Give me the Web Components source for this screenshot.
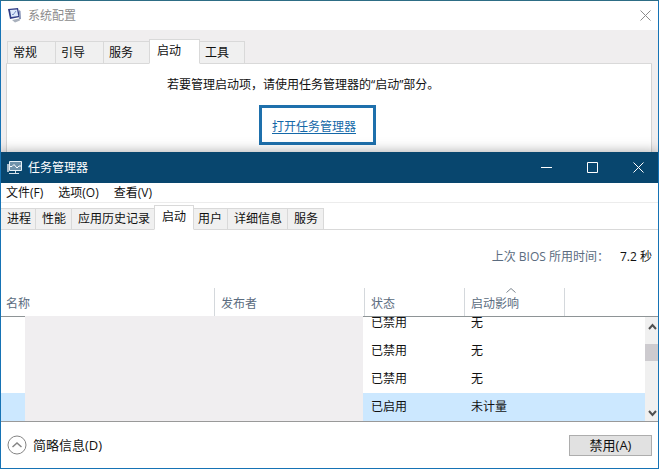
<!DOCTYPE html>
<html lang="zh-CN">
<head>
<meta charset="utf-8">
<title>系统配置</title>
<style>
  body {
    margin: 0;
    background: #fff;
    color: #111;
    font: 12px/18px "Open Sans", "Noto Sans CJK SC", sans-serif;
  }
</style>
</head>
<body>
<app-window class="config">
  <title-bar slot="title" controls="close">
    <svg slot="icon" width="15" height="15" viewBox="0 0 15 15">
      <path d="M1 1l10-1 2 9-10 2z" fill="#303c86"/>
      <path d="M3 2l7-.6 1.300 6.600-7 1z" fill="#dce8fa"/>
      <path d="M5 6l1 1 3-4" fill="none" stroke="#7a91c8"/>
      <path d="M12 2l1.500 1 .5 8-2 .5" fill="#8794b8"/>
      <path d="M5 12l7-1.500 1 2-5 2z" fill="#a9b1bd"/>
    </svg>
    系统配置
  </title-bar>
  <tab-strip variant="dialog" tabs="常规,引导,服务,启动,工具" active="启动"></tab-strip>
  <startup-panel></startup-panel>
</app-window>

<app-window class="manager">
  <title-bar slot="title" theme="dark" controls="min,max,close">
    <svg slot="icon" width="15" height="15" viewBox="0 0 15 15">
      <path d="M0 4h2v8H0z" fill="#a9bccb"/>
      <path d="M2.500 1.500h12v9h-12z" fill="#6f92aa" stroke="#e6f1f7"/>
      <path d="M3 6.500h2l2-2 3 3.500 2-2h2" fill="none" stroke="#fff"/>
      <path d="M8.500 11v2M2 13.500h10" stroke="#d3e0e9"/>
    </svg>
    任务管理器
  </title-bar>
  <menu-bar items="文件(F),选项(O),查看(V)"></menu-bar>
  <tab-strip tabs="进程,性能,应用历史记录,启动,用户,详细信息,服务" active="启动"></tab-strip>
  <bios-time><span slot="label">上次 BIOS 所用时间：</span>7.2 秒</bios-time>
  <startup-table></startup-table>
  <window-footer></window-footer>
</app-window>

<script>
class BaseElement extends HTMLElement {
  connectedCallback() {
    if (this.shadowRoot) return;
    const shadow = this.attachShadow({ mode: 'open' });
    const template = document.createElement('template');
    template.innerHTML = this.render();
    shadow.appendChild(template.content.cloneNode(true));
  }
}

class AppWindow extends BaseElement {
  render() {
    return `
      <style>
        :host {
          display: block;
          border: solid #1673b5;
          border-width: 0 1px;
          background: #fff;
        }
        :host(.config) {
          border-top: 1px solid #2d6d85;
        }
        :host(.config) .content {
          padding: 9px 6px 0 5px;
          background: #f0eeef;
        }
        :host(.manager) {
          position: relative;
          border-bottom: 1px solid #1673b5;
          box-shadow: 0 0 12px rgba(0, 0, 0, 0.35);
        }
      </style>
      <slot name="title"></slot>
      <div class="content"><slot></slot></div>
    `;
  }
}

const controlIcons = {
  min: { label: '最小化', path: 'M0 5.500h11' },
  max: { label: '最大化', path: 'M.5.500h10v10H.5z' },
  close: { label: '关闭', path: 'M.5.500l10 10M10.500.500l-10 10' }
};

class TitleBar extends BaseElement {
  render() {
    const buttons = this.getAttribute('controls').split(',').map(name => `
      <button aria-label="${controlIcons[name].label}">
        <svg width="11" height="11" viewBox="0 0 11 11"><path d="${controlIcons[name].path}"/></svg>
      </button>
    `).join('');

    return `
      <style>
        :host {
          display: flex;
          align-items: center;
          height: 29px;
          padding: 0 1px 0 6px;
          color: #8c8c8c;
        }
        :host([theme="dark"]) {
          height: 31px;
          padding: 0 8px 0 6px;
          background: #08466e;
          color: #fff;
        }
        ::slotted(svg) {
          display: block;
        }
        .title {
          flex: 1;
          margin-left: 6px;
        }
        .controls {
          display: flex;
          gap: 22px;
        }
        button {
          display: grid;
          place-items: center;
          width: 24px;
          height: 24px;
          padding: 0;
          border: 0;
          background: none;
          color: inherit;
        }
        path {
          fill: none;
          stroke: currentColor;
        }
      </style>
      <slot name="icon"></slot>
      <span class="title"><slot></slot></span>
      <div class="controls">${buttons}</div>
    `;
  }
}

class TabStrip extends BaseElement {
  render() {
    const active = this.getAttribute('active');
    const tabs = this.getAttribute('tabs').split(',').map(name =>
      `<button role="tab" aria-selected="${name === active}">${name}</button>`
    ).join('');

    return `
      <style>
        :host {
          display: block;
          padding-top: 2px;
          background: linear-gradient(#d9d9d9, #d9d9d9) bottom / 100% 1px no-repeat;
        }
        :host([variant="dialog"]) {
          padding: 0 1px;
        }
        .tabs {
          display: flex;
          align-items: flex-end;
        }
        button {
          height: 22px;
          padding: 0 5px 0 6px;
          border: solid #d9d9d9;
          border-width: 1px 0 1px 1px;
          background: #f0f0f0;
          color: inherit;
          font: inherit;
          white-space: nowrap;
        }
        button:first-child {
          padding-right: 4px;
          border-left-width: 0;
        }
        button:last-child {
          border-right-width: 1px;
        }
        button[aria-selected="true"] {
          position: relative;
          height: 25px;
          margin: 0 -3px 0 -1px;
          padding: 0 7px 2px;
          border-right-width: 1px;
          border-bottom-color: #fff;
          background: #fff;
        }
        :host([variant="dialog"]) button {
          height: 23px;
          padding: 0 18px 0 5px;
          border-left-width: 1px;
        }
        :host([variant="dialog"]) button:last-child {
          padding-right: 15px;
        }
        :host([variant="dialog"]) button[aria-selected="true"] {
          height: 25px;
          margin: 0 -1px 0 -2px;
          padding: 0 18px 2px 7px;
        }
      </style>
      <div class="tabs" role="tablist">${tabs}</div>
    `;
  }
}

class StartupPanel extends BaseElement {
  render() {
    return `
      <style>
        :host {
          display: block;
          padding: 12px 0 7px;
          border: solid #d4d4d4;
          border-width: 0 1px;
          background: #fff;
        }
        .message {
          width: 324px;
          margin: 0 auto;
        }
        p {
          margin: 0 0 11px;
        }
        .highlight {
          display: inline-block;
          box-sizing: border-box;
          height: 40px;
          margin-left: 92px;
          padding: 10px 17px 0 10px;
          border: 3px solid #1e70ac;
          vertical-align: top;
        }
        a {
          color: #1468a8;
          text-underline-offset: 2px;
        }
      </style>
      <div class="message">
        <p>若要管理启动项，请使用任务管理器的“启动”部分。</p>
        <span class="highlight"><a href="#">打开任务管理器</a></span>
      </div>
    `;
  }
}

class MenuBar extends BaseElement {
  render() {
    const items = this.getAttribute('items').split(',')
      .map(item => `<button>${item}</button>`).join('');

    return `
      <style>
        :host {
          display: flex;
          gap: 15px;
          height: 19px;
          padding: 0 5px;
          border-bottom: 1px solid #ececec;
        }
        button {
          padding: 0;
          border: 0;
          background: none;
          color: inherit;
          font: inherit;
        }
      </style>
      ${items}
    `;
  }
}

class BiosTime extends BaseElement {
  render() {
    return `
      <style>
        :host {
          display: flex;
          justify-content: flex-end;
          align-items: center;
          gap: 11px;
          height: 54px;
          padding: 0 6px 1px;
        }
        ::slotted([slot="label"]) {
          color: #5b6c80;
        }
      </style>
      <slot name="label"></slot>
      <span><slot></slot></span>
    `;
  }
}

const startupItems = [
  { status: '已禁用', impact: '无' },
  { status: '已禁用', impact: '无' },
  { status: '已禁用', impact: '无' },
  { status: '已启用', impact: '未计量', selected: true }
];

class StartupTable extends BaseElement {
  render() {
    const rows = startupItems.map(item => `
      <tr class="${item.selected ? 'selected' : ''}">
        <td></td><td></td><td>${item.status}</td><td>${item.impact}</td>
      </tr>
    `).join('');

    return `
      <style>
        :host {
          display: block;
          position: relative;
          border-bottom: 1px solid #999;
        }
        table, thead {
          display: block;
        }
        tr {
          display: grid;
          grid-template-columns: 1fr 150px 100px 100px 93px;
        }
        th, td {
          padding: 0 6px;
          text-align: left;
          font-weight: normal;
        }
        thead tr {
          height: 31px;
          border-bottom: 1px solid #8e9496;
          color: #5b6c80;
        }
        th {
          position: relative;
          margin-top: 3px;
          padding: 7px 5px 0;
          border-right: 1px solid #d4d8dc;
        }
        th:nth-child(n+2) {
          padding-left: 6px;
        }
        .sort {
          position: absolute;
          top: 0;
          left: calc(50% - 9px);
          fill: none;
          stroke: #7c858e;
        }
        /* the first row is partly scrolled under the header */
        tbody {
          display: flex;
          flex-direction: column;
          justify-content: flex-end;
          height: 104px;
          margin-right: 13px;
          overflow: hidden;
        }
        tbody tr {
          flex: none;
          height: 28px;
          grid-template-columns: 1fr 150px 100px 100px 80px;
          align-items: center;
          line-height: 14px;
        }
        .selected {
          background: #cce8ff;
        }
        .mask {
          position: absolute;
          left: 24px;
          right: 295px;
          bottom: 0;
          height: 105px;
          background: #f0eef0;
        }
        .scrollbar {
          position: absolute;
          right: 0;
          bottom: 0;
          display: flex;
          flex-direction: column;
          justify-content: space-between;
          width: 13px;
          height: 104px;
          background: #f0f0f0;
        }
        .scrollbar svg {
          fill: none;
          stroke: #505050;
          stroke-width: 2;
        }
        .thumb {
          height: 17px;
          margin-bottom: 34px;
          background: #cdcbcf;
        }
      </style>
      <table>
        <thead>
          <tr>
            <th>名称</th><th>发布者</th><th>状态</th>
            <th>启动影响<svg class="sort" width="10" height="5" viewBox="0 0 10 5"><path d="M.5 4.500L5 .5l4.500 4"/></svg></th>
          </tr>
        </thead>
        <tbody>${rows}</tbody>
      </table>
      <div class="mask"></div>
      <div class="scrollbar">
        <svg width="13" height="17" viewBox="0 0 13 17"><path d="M4 12l3.500-4L11 12"/></svg>
        <div class="thumb"></div>
        <svg width="13" height="17" viewBox="0 0 13 17"><path d="M4 7l3.500 4L11 7"/></svg>
      </div>
    `;
  }
}

class WindowFooter extends BaseElement {
  render() {
    return `
      <style>
        :host {
          display: flex;
          justify-content: space-between;
          align-items: center;
          height: 46px;
          padding: 0 6px;
          font-size: 13px;
        }
        button {
          padding: 0;
          color: inherit;
          font: inherit;
        }
        .details {
          display: flex;
          align-items: center;
          gap: 6px;
          border: 0;
          background: none;
        }
        .details svg {
          fill: none;
          stroke: #858585;
        }
        .disable {
          width: 83px;
          height: 21px;
          border: 1px solid #adadad;
          background: #e1e1e1;
          line-height: 19px;
        }
      </style>
      <button class="details">
        <svg width="20" height="20" viewBox="0 0 20 20">
          <circle cx="10" cy="10" r="9"/>
          <path d="M5.500 12L10 8l4.500 4" stroke-width="1.500"/>
        </svg>
        简略信息(D)
      </button>
      <button class="disable">禁用(A)</button>
    `;
  }
}

customElements.define('app-window', AppWindow);
customElements.define('title-bar', TitleBar);
customElements.define('tab-strip', TabStrip);
customElements.define('startup-panel', StartupPanel);
customElements.define('menu-bar', MenuBar);
customElements.define('bios-time', BiosTime);
customElements.define('startup-table', StartupTable);
customElements.define('window-footer', WindowFooter);
</script>
</body>
</html>
